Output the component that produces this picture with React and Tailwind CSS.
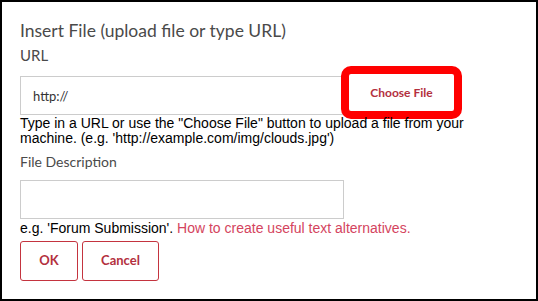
export default function App() {
	return (
		<div className="w-[538px] h-[301px] border-2 border-black bg-white px-[18px] pt-[17px] font-['Lato',sans-serif] overflow-hidden">
			<h1 className="text-[17.5px] leading-[24px] text-[#4a4a4a] font-normal">Insert File (upload file or type URL)</h1>
			<label className="block mt-[2px] text-[15px] leading-[20px] text-[#4a4a4a]">URL</label>

			<div className="mt-[9px] flex items-start">
				<input
					type="text"
					defaultValue="http://"
					className="mt-[2px] w-[329px] h-[39px] border border-[#cccccc] pl-[12px] text-[13px] text-[#333] outline-none"
				/>
				<button className="w-[105px] h-[37px] bg-white rounded-[2px] outline-[8px] outline-solid outline-[#ff0000] text-[12px] font-bold text-[#b3303e]">
					Choose File
				</button>
			</div>

			<p className="mt-[1px] font-['Liberation_Sans',Arial,sans-serif] text-[14px] leading-[15px] text-black">
				Type in a URL or use the "Choose File" button to upload a file from your machine. (e.g. 'http://example.com/img/clouds.jpg')
			</p>

			<label className="block mt-[6px] text-[14px] leading-[20px] text-[#4a4a4a]">File Description</label>
			<input type="text" className="mt-[8px] block w-[324px] h-[39px] border border-[#cccccc] outline-none" />

			<p className="mt-[2px] font-['Liberation_Sans',Arial,sans-serif] text-[14px] leading-[15px] text-black">
				e.g. 'Forum Submission'. <a className="text-[#d4445e]">How to create useful text alternatives.</a>
			</p>

			<div className="mt-[5px] flex gap-[4px]">
				<button className="w-[58px] h-[40px] border border-[#c4343f] rounded-[3px] text-[13px] font-bold text-[#b3303e]">OK</button>
				<button className="w-[77px] h-[40px] border border-[#c4343f] rounded-[3px] text-[13px] font-bold text-[#b3303e]">Cancel</button>
			</div>
		</div>
	);
}
